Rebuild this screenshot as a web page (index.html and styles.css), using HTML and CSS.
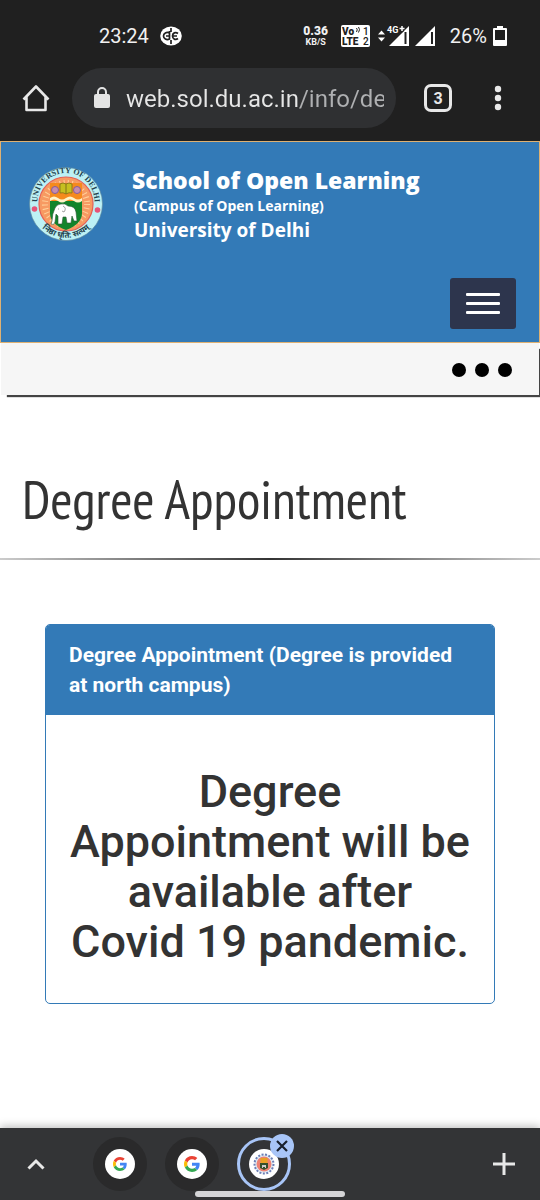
FILE: index.html
```html
<!DOCTYPE html>
<html lang="en">
<head>
    <meta charset="UTF-8">
    <meta name="viewport" content="width=device-width, initial-scale=1">
    <title>Degree Appointment</title>
    <link rel="stylesheet" href="styles.css">
</head>
<body>
<div class="status-bar">
    <div class="status-left">
        <span class="clock">23:24</span>
        <svg width="22" height="20" viewBox="0 0 22 20">
            <ellipse cx="11" cy="10" rx="10.8" ry="9.4" fill="#fff"/>
            <path d="M9.500 7C6.500 5.500 3.500 7.500 3.500 10s3 4.500 6 3V5M18 7.500c-2.500-2-5.500-.5-5.500 2.500s3 4.500 5.500 2.500M6 10h3M13 10h4M11 2v4M11 14v4" fill="none" stroke="#202020" stroke-width="1.700"/>
        </svg>
    </div>
    <div class="status-right">
        <div class="speed"><b>0.36</b><span>KB/S</span></div>
        <svg class="volte" width="29" height="22" viewBox="0 0 29 22">
            <rect width="29" height="22" rx="2" fill="#fff"/>
            <g class="volte-text" fill="#202020">
                <text x="1" y="10">Vo</text>
                <text x="1" y="20">LTE</text>
                <text x="22" y="10" class="thin">1</text>
                <text x="22" y="20" class="thin">2</text>
            </g>
            <path d="M15.500 3q1.500 1.500 0 4M17.500 2q2 2.500 0 5.500" fill="none" stroke="#202020"/>
        </svg>
        <svg class="signal-4g" width="31" height="22" viewBox="0 0 31 22">
            <path d="M0 9.500L3.500 5.500 7 9.500zM0 12.500h7l-3.500 4z" fill="#fff"/>
            <path d="M11 21L31 1v20z" fill="#fff"/>
            <path d="M27.500 7v12" stroke="#202020" stroke-width="2"/>
            <path d="M8 0h18v6l-5 4H8z" fill="#202020"/>
            <text x="9" y="8" fill="#fff">4G</text>
            <path d="M21.500 3.500h5M24 1v5" stroke="#fff" stroke-width="1.500"/>
        </svg>
        <svg class="signal" width="20" height="20" viewBox="0 0 20 20">
            <path d="M0 20L20 0v20z" fill="#fff"/>
            <path d="M17 6v12" stroke="#202020" stroke-width="2"/>
        </svg>
        <span class="percent">26%</span>
        <svg width="14" height="20" viewBox="0 0 14 20">
            <path d="M4 0h6v2h3q1 0 1 1v16q0 1-1 1H1q-1 0-1-1V3q0-1 1-1h3z" fill="#fff"/>
            <path d="M2 4h10v10H2z" fill="#202020"/>
        </svg>
    </div>
</div>

<div class="toolbar">
    <a class="home" href="#" aria-label="Home">
        <svg width="28" height="28" viewBox="0 0 28 28" fill="none" stroke="#e8e8e8" stroke-width="2.600">
            <path d="M1.500 15.500L14 2.500l12.500 13M4.500 13v13h19V13" stroke-linejoin="round"/>
        </svg>
    </a>
    <label class="address">
        <svg width="16" height="22" viewBox="0 0 16 22">
            <rect y="7" width="16" height="14" rx="2" fill="#e4e4e4"/>
            <path d="M4 8V5a4 4 0 0 1 8 0v3" fill="none" stroke="#e4e4e4" stroke-width="2"/>
        </svg>
        <input type="text" value="web.sol.du.ac.in/info/degree" aria-label="Address">
    </label>
    <button class="tab-count">3</button>
    <button class="more" aria-label="More">
        <svg width="8" height="26" viewBox="0 0 8 26" fill="#e8e8e8">
            <circle cx="4" cy="4" r="3.200"/><circle cx="4" cy="13" r="3.200"/><circle cx="4" cy="22" r="3.200"/>
        </svg>
    </button>
</div>

<header class="site-header">
    <div class="brand">
        <svg class="seal" width="74" height="76" viewBox="0 0 74 76">
            <defs>
                <path id="ring-top" d="M9.500 43A28.500 28.500 0 1 1 64.500 43"/>
                <path id="ring-bottom" d="M6 51A33.500 33.500 0 0 0 68 51"/>
            </defs>
            <circle cx="37" cy="38" r="36.500" fill="#bdf1f5" stroke="#5d89a0" stroke-width=".7"/>
            <circle cx="37" cy="38" r="27" fill="#f79a62" stroke="#e65f54" stroke-width="1.200"/>
            <circle cx="37" cy="38" r="21" fill="none" stroke="#ffd09a" stroke-width="6" stroke-dasharray="1 3"/>
            <path d="M21 17h32v20H21z" fill="#f58a1d"/>
            <path d="M21 35h32v12q0 11-16 17-16-6-16-17z" fill="#12842b"/>
            <path d="M21 32q4-3 8 0t8 0 8 0 8 0v3q-4 3-8 0t-8 0-8 0-8 0z" fill="#fff3c8"/>
            <path d="M31 18q3-2 6 0 3-2 6 0v9q-3-1-6 1-3-2-6-1z" fill="#c6bf20" stroke="#80701a" stroke-width=".8"/>
            <path d="M37 18v10" stroke="#80701a"/>
            <circle cx="26" cy="24" r="3.500" fill="#c78cae" stroke="#855d9c"/>
            <circle cx="48" cy="24" r="3.500" fill="#c78cae" stroke="#855d9c"/>
            <path d="M26 42q2-4 6-4 4-1 7 2 7 0 8 6l1 9h-3l-2-5-1 7h-4l-1-6h-3l-1 7h-4v-8l-2-2-1 8q-1 4-4 2l1-3q0-7 3-13z" fill="#fff" stroke="#31563a" stroke-width=".6"/>
            <path d="M34 40q4 2 1 6l-2-1M29 43h1" fill="none" stroke="#888" stroke-width=".8"/>
            <circle cx="5.500" cy="43" r="2.800" fill="#e75478"/>
            <circle cx="68.500" cy="44" r="2.800" fill="#e75478"/>
            <text class="seal-text"><textPath href="#ring-top" startOffset="50%" text-anchor="middle">UNIVERSITY OF DELHI</textPath></text>
            <text class="seal-motto"><textPath href="#ring-bottom" startOffset="50%" text-anchor="middle">निष्ठा धृति: सत्यम्</textPath></text>
        </svg>
        <div class="brand-text">
            <strong>School of Open Learning</strong>
            <small>(Campus of Open Learning)</small>
            <span>University of Delhi</span>
        </div>
    </div>
    <button class="menu" aria-label="Menu"><i></i><i></i><i></i></button>
</header>

<nav class="sub-nav">
    <button class="dots" aria-label="More links"><i></i><i></i><i></i></button>
</nav>

<main>
    <h1>Degree Appointment</h1>
    <hr>
    <section class="panel">
        <h2>Degree Appointment (Degree is provided at north campus)</h2>
        <p>Degree Appointment will be available after Covid 19 pandemic.</p>
    </section>
</main>

<div class="tab-strip">
    <button class="expand" aria-label="Show tabs">
        <svg width="18" height="12" viewBox="0 0 18 12" fill="none" stroke="#e8e8e8" stroke-width="3"><path d="M1.500 10.500L9 3l7.500 7.500"/></svg>
    </button>
    <div class="tabs">
        <button class="tab" aria-label="Google">
            <span class="favicon">
                <svg width="14" height="14" viewBox="0 0 48 48">
                    <path fill="#ea4335" d="M24 9.500c3.540 0 6.710 1.220 9.210 3.600l6.850-6.850C35.900 2.380 30.470 0 24 0 14.620 0 6.510 5.380 2.560 13.220l7.980 6.190C12.430 13.720 17.740 9.500 24 9.500z"/>
                    <path fill="#4285f4" d="M46.980 24.550c0-1.570-.15-3.090-.38-4.550H24v9.020h12.940c-.58 2.960-2.260 5.480-4.780 7.180l7.730 6c4.510-4.180 7.090-10.360 7.090-17.650z"/>
                    <path fill="#fbbc05" d="M10.530 28.590c-.48-1.450-.76-2.990-.76-4.590s.27-3.140.76-4.590l-7.980-6.190C.92 16.460 0 20.120 0 24s.92 7.540 2.560 10.780l7.970-6.190z"/>
                    <path fill="#34a853" d="M24 48c6.480 0 11.930-2.130 15.890-5.810l-7.730-6c-2.150 1.450-4.920 2.300-8.160 2.300-6.260 0-11.570-4.220-13.470-9.910l-7.980 6.190C6.510 42.620 14.620 48 24 48z"/>
                </svg>
            </span>
        </button>
        <button class="tab" aria-label="Google">
            <span class="favicon">
                <svg width="16" height="16" viewBox="0 0 48 48">
                    <path fill="#ea4335" d="M24 9.500c3.540 0 6.710 1.220 9.210 3.600l6.850-6.850C35.900 2.380 30.470 0 24 0 14.620 0 6.510 5.380 2.560 13.220l7.980 6.190C12.430 13.720 17.740 9.500 24 9.500z"/>
                    <path fill="#4285f4" d="M46.980 24.550c0-1.570-.15-3.090-.38-4.550H24v9.020h12.940c-.58 2.960-2.260 5.480-4.780 7.180l7.730 6c4.510-4.180 7.090-10.360 7.090-17.650z"/>
                    <path fill="#fbbc05" d="M10.530 28.590c-.48-1.450-.76-2.990-.76-4.590s.27-3.140.76-4.590l-7.980-6.190C.92 16.460 0 20.120 0 24s.92 7.540 2.560 10.780l7.970-6.190z"/>
                    <path fill="#34a853" d="M24 48c6.480 0 11.930-2.130 15.890-5.810l-7.730-6c-2.150 1.450-4.920 2.300-8.160 2.300-6.260 0-11.570-4.220-13.470-9.910l-7.980 6.190C6.510 42.620 14.620 48 24 48z"/>
                </svg>
            </span>
        </button>
        <div class="tab current">
            <span class="favicon">
                <svg width="22" height="22" viewBox="0 0 22 22">
                    <circle cx="11" cy="11" r="9.500" fill="#dfeaf5" stroke="#6c7fb5" stroke-width="2" stroke-dasharray="2 1.500"/>
                    <circle cx="11" cy="11" r="7.500" fill="#ee8273"/>
                    <path d="M7.500 5h7v7h-7z" fill="#e8a127"/>
                    <path d="M7 10h8v5l-4 2-4-2z" fill="#34502c"/>
                    <path d="M9 12h4v3h-1v-1h-2v1H9z" fill="#ccc"/>
                </svg>
            </span>
            <button class="close" aria-label="Close tab">
                <svg width="12" height="12" viewBox="0 0 12 12" stroke="#18202c" stroke-width="2.200"><path d="M1 1l10 10M11 1L1 11"/></svg>
            </button>
        </div>
    </div>
    <button class="new-tab" aria-label="New tab">
        <svg width="22" height="22" viewBox="0 0 22 22" stroke="#e8e8e8" stroke-width="3"><path d="M11 0v22M0 11h22"/></svg>
    </button>
    <div class="gesture-bar"></div>
</div>
</body>
</html>
```
FILE: styles.css
```css
* {
    box-sizing: border-box;
}
body {
    margin: 0;
    min-height: 100vh;
    display: flex;
    flex-direction: column;
    overflow-x: hidden;
    background: #fff;
    color: #333;
    font-family: Roboto, sans-serif;
}
svg {
    display: block;
    flex: none;
}
button {
    display: flex;
    align-items: center;
    justify-content: center;
    padding: 0;
    border: 0;
    background: none;
    font-family: inherit;
}

/* phone status bar */
.status-bar {
    display: flex;
    justify-content: space-between;
    height: 56px;
    padding: 16px 33px 0 99px;
    background: #202020;
    color: #f1f1f1;
    font-size: 20px;
}
.status-left,
.status-right {
    display: flex;
    align-items: center;
}
.status-left {
    gap: 11px;
}
.speed {
    display: flex;
    flex-direction: column;
    align-items: center;
    margin-right: 13px;
    font-size: 9px;
    font-weight: 700;
    line-height: 11px;
}
.speed b {
    font-size: 12px;
    line-height: 12px;
}
.volte {
    margin-right: 8px;
}
.volte-text {
    font: 900 10px Roboto, sans-serif;
}
.volte-text .thin {
    font-weight: 500;
}
.signal-4g {
    margin-right: 6px;
    font: 700 9px Roboto, sans-serif;
}
.percent {
    margin: 0 6px 0 15px;
}

/* browser toolbar */
.toolbar {
    display: flex;
    align-items: center;
    padding: 12px 38px 13px 22px;
    background: #202020;
}
.address {
    flex: 1;
    display: flex;
    align-items: center;
    gap: 16px;
    min-width: 0;
    height: 60px;
    margin: 0 28px 0 22px;
    padding: 0 12px 0 22px;
    border-radius: 30px;
    background: #2f3032;
}
.address input {
    flex: 1;
    min-width: 0;
    padding: 2px 0 0;
    border: 0;
    outline: 0;
    background: linear-gradient(90deg, #e6e6e6 174px, #afb0b2 174px);
    -webkit-background-clip: text;
    background-clip: text;
    color: transparent;
    font-family: inherit;
    font-size: 24px;
    line-height: 30px;
}
.tab-count {
    width: 28px;
    height: 28px;
    margin-right: 42px;
    border: 3px solid #e8e8e8;
    border-radius: 7px;
    color: #e8e8e8;
    font-size: 16px;
    font-weight: 700;
}

/* site header */
.site-header {
    display: flex;
    flex-direction: column;
    padding: 24px 23px 13px 28px;
    border: 1px solid #dfb172;
    background: #337ab7;
    color: #fff;
}
.brand {
    display: flex;
    gap: 29px;
}
.seal-text {
    font: 700 8px "Liberation Serif", serif;
    fill: #24424e;
}
.seal-motto {
    font: 700 8px "Noto Sans", sans-serif;
    fill: #24424e;
}
.brand-text {
    display: flex;
    flex-direction: column;
    font-family: "Open Sans", sans-serif;
    font-weight: 700;
    white-space: nowrap;
}
.brand-text strong {
    font-size: 23px;
    line-height: 28px;
}
.brand-text small {
    padding-left: 2px;
    font-size: 14px;
    line-height: 24px;
}
.brand-text span {
    padding-left: 2px;
    font-size: 19px;
    line-height: 24px;
}
.menu {
    flex-direction: column;
    gap: 6px;
    align-self: flex-end;
    width: 66px;
    height: 51px;
    margin-top: 36px;
    border-radius: 3px;
    background: #2d354d;
}
.menu i {
    width: 34px;
    height: 3px;
    border-radius: 1px;
    background: #fff;
}

.sub-nav {
    display: flex;
    justify-content: flex-end;
    height: 52px;
    margin: 0 1px;
    padding: 2px 27px 0 0;
    background: #f6f6f6;
    box-shadow: 4px 4px 1px -2px #444;
}
.dots {
    gap: 9px;
}
.dots i {
    width: 14px;
    height: 14px;
    border-radius: 50%;
    background: #000;
}

main {
    flex: 1;
}
h1 {
    margin: 0;
    padding: 72px 22px 27px;
    font-family: "PT Sans Narrow", "Liberation Sans Narrow", "Open Sans Condensed", Roboto, sans-serif;
    font-size: 54px;
    font-weight: 400;
    line-height: 64px;
}
hr {
    height: 2px;
    margin: 0;
    border: 0;
    background: linear-gradient(90deg, #ccc, #333 50%, #ccc);
}
.panel {
    margin: 64px 45px 40px;
    border: 1px solid #337ab7;
    border-radius: 5px;
    overflow: hidden;
}
.panel h2 {
    margin: 0;
    padding: 15px 23px;
    background: #337ab7;
    color: #fff;
    font-size: 21px;
    font-weight: 700;
    line-height: 30px;
}
.panel p {
    margin: 0;
    padding: 52px 23px 36px;
    font-size: 45px;
    font-weight: 500;
    line-height: 50px;
    text-align: center;
}

/* bottom tab strip */
.tab-strip {
    position: relative;
    display: flex;
    align-items: center;
    height: 72px;
    padding: 0 25px 0 27px;
    background: #333436;
    box-shadow: 0 -2px 8px rgba(0, 0, 0, 0.25);
}
.tabs {
    display: flex;
    gap: 18px;
    margin: 0 auto 0 48px;
}
.tab {
    position: relative;
    display: flex;
    align-items: center;
    justify-content: center;
    width: 54px;
    height: 54px;
    border-radius: 50%;
    background: #2a2a2b;
}
.current {
    border: 3px solid #a8c5f7;
    background: none;
}
.favicon {
    display: flex;
    align-items: center;
    justify-content: center;
    width: 30px;
    height: 30px;
    border-radius: 50%;
    background: #fff;
}
.close {
    position: absolute;
    top: -6px;
    right: -6px;
    width: 24px;
    height: 24px;
    border-radius: 50%;
    background: #a8c5f7;
}
.gesture-bar {
    position: absolute;
    bottom: 3px;
    left: 50%;
    width: 150px;
    height: 6px;
    margin-left: -75px;
    border-radius: 3px;
    background: #d5d5d7;
}
```
